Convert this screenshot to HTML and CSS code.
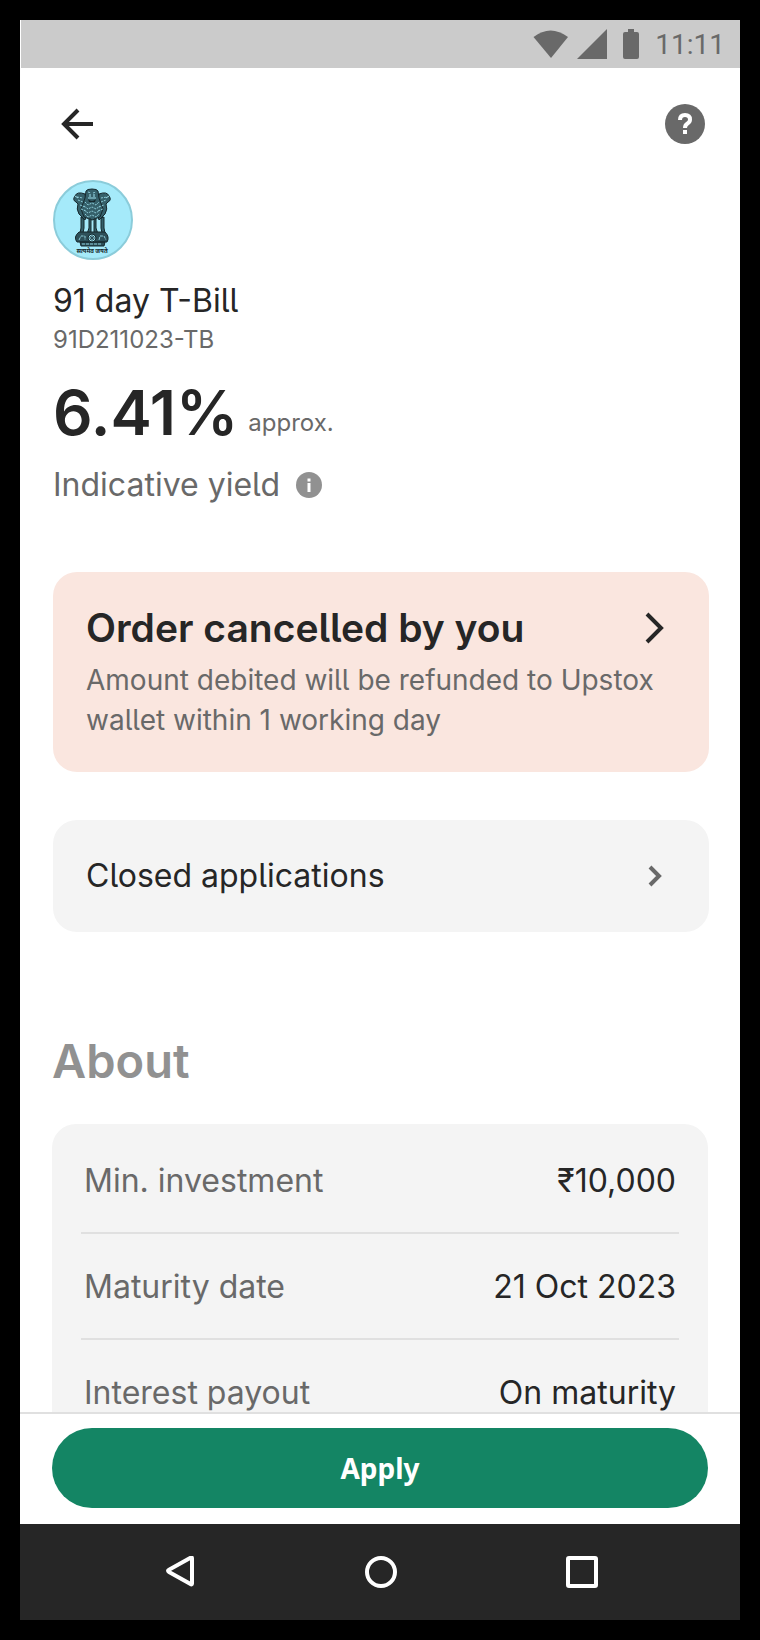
FILE: index.html
```html
<!DOCTYPE html>
<html lang="en">
<head>
<meta charset="UTF-8">
<meta name="viewport" content="width=device-width, initial-scale=1.0">
<title>91 day T-Bill</title>
<link rel="stylesheet" href="styles.css">
</head>
<body>

<div class="phone">
    <div class="status-bar">
        <svg width="36" height="30" viewBox="0 0 36 30"><path d="M0.500 8Q17.500 -5 35 8L18 29Z" fill="#696969"/></svg>
        <svg width="30" height="30" viewBox="0 0 30 30"><path d="M30 0V30H0Z" fill="#696969"/></svg>
        <svg class="battery" width="16" height="30" viewBox="0 0 16 30"><path d="M5 0h6v3h3q2 0 2 2v23q0 2-2 2H2q-2 0-2-2V5q0-2 2-2h3z" fill="#696969"/></svg>
        <span class="clock">11:11</span>
    </div>

    <header class="top-bar">
        <button class="icon-button" type="button" aria-label="Back">
            <svg width="48" height="40" viewBox="0 0 48 40"><path d="M40 20H11M25 6L11 20L25 34" fill="none" stroke="#262626" stroke-width="4"/></svg>
        </button>
        <button class="icon-button" type="button" aria-label="Help">
            <svg width="40" height="40" viewBox="0 0 40 40">
                <circle cx="20" cy="20" r="20" fill="#696969"/>
                <path d="M15 16Q15 11 20 11Q25 11 25 15.500Q25 18 22.500 19.500Q20 21 20 24" fill="none" stroke="#fff" stroke-width="4"/>
                <path d="M18 26h4v4h-4z" fill="#fff"/>
            </svg>
        </button>
    </header>

    <main class="content">
        <section class="overview">
            <svg class="emblem" width="80" height="80" viewBox="0 0 80 80">
                <circle cx="40" cy="40" r="39" fill="#a5eafa" stroke="#8bccda" stroke-width="2"/>
                <!-- lions -->
                <g fill="#35606a" stroke="#16282d" stroke-width="1">
                    <path d="M32 14q-8-3-10 2q-3 4 1 6l2 2q-2 5 1 10l6 6l3-10z"/>
                    <path d="M46 14q8-3 10 2q3 4-1 6l-2 2q2 5-1 10l-6 6l-3-10z"/>
                    <path d="M33 11q1-2 6-2q5 0 6 2l1 7l4 11l-3 8l-8 3l-8-3l-3-8l4-11z"/>
                    <path d="M28 37l3 2v9l-1 5h-3l1-5zM36 39h2v9v6h-4l2-6zM41 39h2v9l2 6h-4v-6zM48 38l3-1v11l1 5h-3l-1-5z"/>
                </g>
                <!-- manes -->
                <g fill="none" stroke="#8ccbd8" stroke-width="1" stroke-dasharray="2 1">
                    <path d="M24 17l6 1M48 18l6-1M25 20l5 2M48 22l5-2M27 25l5 2M46 27l5-2M28 29l5 2M45 31l5-2"/>
                    <path d="M35 12l3 1M40 13l3-1M32 22l3 3l4-2l4 2l3-3M31 26l4 3l4-2l4 2l4-3M31 30l4 3l4-2l4 2l4-3M32 34l3 3l4-2l4 2l3-3"/>
                </g>
                <path d="M35 19q4 4 8 0l-1 3h-6z" fill="#16282d"/>
                <path d="M37 14v3M41 14v3M35 18h8" fill="none" stroke="#9edeeb" stroke-width="1"/>
                <path d="M22 16l3 2M53 18l3-2" stroke="#9edeeb" stroke-width="1"/>
                <!-- base with the wheel -->
                <path d="M26 52h26q5 5 2 10H24q-4-5 2-10zM27 62h25l-1 4H28z" fill="#2d5059" stroke="#16282d" stroke-width="1"/>
                <circle cx="39" cy="58" r="4" fill="#9edeeb" stroke="#16282d" stroke-width="1"/>
                <path d="M35 58h8M39 54v8M36 55l6 6M42 55l-6 6" stroke="#2d5059" stroke-width="1"/>
                <path d="M26 60l2-4h4v4M46 60l1-4h4l2 4M29 64h20" fill="none" stroke="#8ccbd8" stroke-width="1" stroke-dasharray="3 1"/>
                <text class="motto" x="39" y="73" text-anchor="middle">सत्यमेव जयते</text>
            </svg>
            <h1 class="name">91 day T-Bill</h1>
            <p class="code">91D211023-TB</p>
            <p class="yield"><strong class="yield-value">6.41%</strong> <span class="yield-note">approx.</span></p>
            <p class="yield-label">Indicative yield
                <svg width="26" height="26" viewBox="0 0 26 26">
                    <circle cx="13" cy="13" r="13" fill="#919191"/>
                    <path d="M11.500 6.500h3v3h-3zM11.500 11h3v9h-3z" fill="#fff"/>
                </svg>
            </p>

            <a class="card order" href="#order">
                <span class="card-head">
                    <span class="order-title">Order cancelled by you</span>
                    <svg width="20" height="32" viewBox="0 0 20 32"><path d="M2 2L16 16L2 30" fill="none" stroke="#262626" stroke-width="4"/></svg>
                </span>
                <span class="order-text">Amount debited will be refunded to Upstox wallet within 1 working day</span>
            </a>

            <a class="card closed" href="#closed">
                <span>Closed applications</span>
                <svg width="20" height="32" viewBox="0 0 20 32"><path d="M5 7L14 16L5 25" fill="none" stroke="#696969" stroke-width="4"/></svg>
            </a>
        </section>

        <section class="about">
            <h2 class="about-title">About</h2>
            <div class="card about-card">
                <table class="facts">
                    <tr><th scope="row">Min. investment</th><td>₹10,000</td></tr>
                    <tr><th scope="row">Maturity date</th><td>21 Oct 2023</td></tr>
                    <tr><th scope="row">Interest payout</th><td>On maturity</td></tr>
                </table>
            </div>
        </section>
    </main>

    <footer class="action-bar">
        <button class="apply" type="button">Apply</button>
    </footer>

    <nav class="nav-bar">
        <button class="icon-button" type="button" aria-label="Back">
            <svg width="32" height="32" viewBox="0 0 32 32"><path d="M27 1.500Q28 1 28 2.500V27.500Q28 29 26.500 28L5 16Q3 14.800 5 13.700Z" fill="none" stroke="#fff" stroke-width="4"/></svg>
        </button>
        <button class="icon-button" type="button" aria-label="Home">
            <svg width="32" height="32" viewBox="0 0 32 32"><circle cx="16" cy="16" r="14" fill="none" stroke="#fff" stroke-width="4"/></svg>
        </button>
        <button class="icon-button" type="button" aria-label="Recent apps">
            <svg width="32" height="32" viewBox="0 0 32 32"><rect x="2" y="2" width="28" height="28" rx="1" fill="none" stroke="#fff" stroke-width="4"/></svg>
        </button>
    </nav>
</div>

</body>
</html>
```

FILE: styles.css
```css
* {
  box-sizing: border-box;
}
body {
  margin: 0;
  padding: 20px;
  background-color: #000;
  color: #262626;
  font-family: Inter, "Noto Sans", sans-serif;
  font-feature-settings: "cv05";
}
h1, h2, p {
  margin: 0;
}
svg {
  display: block;
  flex-shrink: 0;
}
a {
  color: inherit;
  text-decoration: none;
}
.phone {
  display: flex;
  flex-direction: column;
  height: calc(100vh - 40px);
  background-color: #fff;
}
.status-bar {
  display: flex;
  align-items: center;
  justify-content: flex-end;
  gap: 8px;
  height: 48px;
  margin-left: 1px;
  padding-right: 15px;
  background-color: #cbcbcb;
}
.battery {
  margin: 0 8px;
}
.clock {
  color: #696969;
  font-family: Roboto, sans-serif;
  font-size: 28px;
}
.icon-button {
  padding: 0;
  border: none;
  background: none;
  cursor: pointer;
}
.top-bar {
  display: flex;
  justify-content: space-between;
  padding: 36px 35px 36px 33px;
}
.content {
  flex: 1;
  min-height: 0;
  overflow: hidden;
}
.overview {
  padding: 0 31px 0 33px;
}
.name {
  margin-top: 20px;
  font-size: 32px;
  font-weight: 400;
  line-height: 42px;
}
.code {
  color: #696969;
  font-size: 24px;
  line-height: 36px;
}
.yield {
  display: flex;
  align-items: flex-end;
  gap: 10px;
  margin-top: 15px;
}
.yield-value {
  font-size: 62px;
  font-weight: 600;
  line-height: 80px;
}
.yield-note {
  padding-bottom: 14px;
  color: #696969;
  font-size: 24px;
  line-height: 32px;
}
.yield-label {
  display: flex;
  align-items: center;
  gap: 16px;
  margin-top: 12px;
  color: #696969;
  font-size: 32px;
  line-height: 40px;
}
.card {
  border-radius: 24px;
  background-color: #f4f4f4;
}
.order {
  display: block;
  margin-top: 67px;
  padding: 32px 44px 32px 33px;
  background-color: #fae6df;
}
.card-head {
  display: flex;
  align-items: center;
  justify-content: space-between;
  font-size: 39px;
  font-weight: 600;
  line-height: 48px;
}
.order-text {
  display: block;
  margin-top: 8px;
  color: #696969;
  font-size: 28px;
  line-height: 40px;
}
.closed {
  display: flex;
  align-items: center;
  justify-content: space-between;
  margin-top: 48px;
  padding: 36px 44px 36px 33px;
  font-size: 32px;
  line-height: 40px;
}
.about {
  padding: 100px 32px 0;
}
.about-title {
  color: #919191;
  font-size: 47px;
  font-weight: 600;
  line-height: 58px;
}
.about-card {
  margin-top: 34px;
  padding: 4px 29px;
}
.facts {
  width: 100%;
  border-spacing: 0;
  font-size: 32px;
  line-height: 40px;
}
.facts th,
.facts td {
  padding: 33px 3px 31px;
  border-bottom: 2px solid #e0e0e0;
  font-weight: 400;
}
.facts th {
  color: #696969;
  text-align: left;
}
.facts td {
  text-align: right;
}
.facts tr:last-child th,
.facts tr:last-child td {
  border-bottom: none;
}
.action-bar {
  padding: 14px 32px 16px;
  border-top: 2px solid #e0e0e0;
}
.apply {
  width: 100%;
  height: 80px;
  border: none;
  border-radius: 40px;
  background-color: #148564;
  color: #fff;
  font-family: "Noto Sans", "Open Sans", sans-serif;
  font-size: 28px;
  font-weight: 700;
  cursor: pointer;
}
.nav-bar {
  display: flex;
  align-items: center;
  justify-content: space-between;
  height: 96px;
  padding: 0 142px 0 144px;
  background-color: #262626;
}
.motto {
  fill: #16282d;
  font-size: 6px;
  font-weight: 700;
}
```
